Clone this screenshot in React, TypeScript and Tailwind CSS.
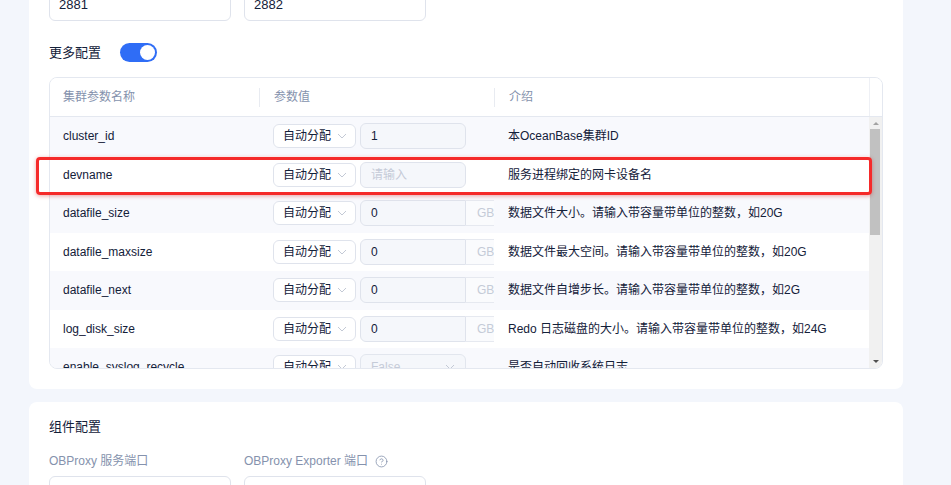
import { CircleHelp } from "lucide-react";

type Row = {
  name: string;
  value?: string;
  placeholder?: string;
  unit?: string;
  select?: string;
  desc: string;
};

const rows: Row[] = [
  { name: "cluster_id", value: "1", desc: "本OceanBase集群ID" },
  { name: "devname", placeholder: "请输入", desc: "服务进程绑定的网卡设备名" },
  { name: "datafile_size", value: "0", unit: "GB", desc: "数据文件大小。请输入带容量带单位的整数，如20G" },
  { name: "datafile_maxsize", value: "0", unit: "GB", desc: "数据文件最大空间。请输入带容量带单位的整数，如20G" },
  { name: "datafile_next", value: "0", unit: "GB", desc: "数据文件自增步长。请输入带容量带单位的整数，如2G" },
  { name: "log_disk_size", value: "0", unit: "GB", desc: "Redo 日志磁盘的大小。请输入带容量带单位的整数，如24G" },
  { name: "enable_syslog_recycle", select: "False", desc: "是否自动回收系统日志" },
];

function Chevron() {
  return (
    <svg width="10" height="6" viewBox="0 0 10 6" fill="none" className="shrink-0">
      <path d="M1 1l4 4 4-4" stroke="#c3c9d5" strokeWidth="1" />
    </svg>
  );
}

function ValueCell({ row }: { row: Row }) {
  return (
    <div className="flex items-center overflow-hidden">
      <div className="flex h-[24px] w-[83px] shrink-0 items-center justify-between rounded-md border border-[#dfe3ec] bg-white pl-[9px] pr-[8px] text-[12px] text-[#132039]">
        <span>自动分配</span>
        <Chevron />
      </div>
      {row.select ? (
        <div className="ml-1 flex h-[26px] w-[106px] shrink-0 items-center justify-between rounded-md border border-[#e2e6ee] bg-[#f5f7fb] pl-[10px] pr-[10px] text-[12px] text-[#c5cbd8]">
          <span>{row.select}</span>
          <Chevron />
        </div>
      ) : row.unit ? (
        <div className="ml-1 flex shrink-0">
          <div className="flex h-[26px] w-[106px] items-center rounded-l-md border border-[#dfe3ec] bg-[#f5f7fb] px-[10px] text-[12px] text-[#132039]">{row.value}</div>
          <div className="flex h-[26px] w-[44px] items-center border-y border-r border-[#e6e9f0] bg-[#fafbfd] pl-[11px] text-[12px] text-[#c5cbd8]">{row.unit}</div>
        </div>
      ) : (
        <div className="ml-1 flex h-[26px] w-[106px] shrink-0 items-center rounded-md border border-[#dfe3ec] bg-[#f5f7fb] px-[10px] text-[12px]">
          {row.value ? <span className="text-[#132039]">{row.value}</span> : <span className="text-[#c5cbd8]">{row.placeholder}</span>}
        </div>
      )}
    </div>
  );
}

export default function App() {
  return (
    <div className="relative min-h-screen overflow-hidden bg-[#f3f6fc] pl-[29px] text-[#132039]" style={{ fontFamily: '"Liberation Sans", "Noto Sans CJK SC", sans-serif' }}>
      <div className="w-[874px]">
        {/* 集群配置 card, top cut off */}
        <section className="-mt-[31px] rounded-lg bg-white px-5 pb-5 pt-5">
          <div className="flex gap-[13px]">
            <div className="flex h-8 w-[182px] items-center rounded-md border border-[#dfe3ec] px-[9px] text-[13px]">2881</div>
            <div className="flex h-8 w-[182px] items-center rounded-md border border-[#dfe3ec] px-[9px] text-[13px]">2882</div>
          </div>

          <div className="mt-[22px] flex h-[19px] items-center gap-[19px]">
            <span className="text-[13px]">更多配置</span>
            <div className="flex h-[19px] w-[37px] items-center justify-end rounded-full bg-[#2f6df6] pr-[2px]">
              <div className="h-[15px] w-[15px] rounded-full bg-white" />
            </div>
          </div>

          <div className="mt-[15px] overflow-hidden rounded-lg border border-[#e4e8f0]">
            <div className="grid h-[39px] grid-cols-[209px_235px_375px_13px] items-center border-b border-[#e4e8f0] bg-white text-[12px] text-[#8592ad]">
              <div className="pl-[13px]">集群参数名称</div>
              <div className="flex h-full items-center">
                <div className="h-[19px] w-px bg-[#e8ebf1]" />
                <span className="pl-[14px]">参数值</span>
              </div>
              <div className="flex h-full items-center">
                <div className="h-[19px] w-px bg-[#e8ebf1]" />
                <span className="pl-[14px]">介绍</span>
              </div>
              <div className="h-full border-l border-[#eef0f5]" />
            </div>

            <div className="flex h-[251px] overflow-hidden">
              <div className="w-[819px]">
                {rows.map((row, i) => (
                  <div key={row.name} className={`grid h-[38.5px] grid-cols-[209px_235px_375px] items-center text-[12px] ${i % 2 === 0 ? "bg-[#f8f9fd]" : "bg-white"}`}>
                    <div className="pl-[13px]">{row.name}</div>
                    <div className="overflow-hidden pl-[14px]">
                      <ValueCell row={row} />
                    </div>
                    <div className="whitespace-nowrap pl-[14px]">{row.desc}</div>
                  </div>
                ))}
              </div>
              {/* scrollbar */}
              <div className="relative w-[13px] bg-[#f1f1f1]">
                <div className="absolute left-1/2 top-[5px] h-0 w-0 -translate-x-1/2 border-x-[3px] border-b-[3px] border-x-transparent border-b-[#a3a3a3]" />
                <div className="absolute left-[1px] top-[12px] h-[106px] w-[10px] bg-[#c1c1c1]" />
                <div className="absolute bottom-[5px] left-1/2 h-0 w-0 -translate-x-1/2 border-x-[3px] border-t-[3px] border-x-transparent border-t-[#505050]" />
              </div>
            </div>
          </div>
        </section>

        {/* 组件配置 card */}
        <section className="mt-[13px] rounded-lg bg-white px-5 pt-[15px]">
          <h3 className="text-[13px] leading-[20px]">组件配置</h3>
          <div className="mt-[14px] flex gap-[13px] text-[12px] leading-[20px] text-[#8592ad]">
            <div className="w-[182px]">OBProxy 服务端口</div>
            <div className="flex w-[182px] items-center gap-[7px]">
              <span>OBProxy Exporter 端口</span>
              <CircleHelp size={13} strokeWidth={1.5} />
            </div>
          </div>
          <div className="mt-[5px] flex gap-[13px]">
            <div className="h-8 w-[182px] rounded-md border border-[#dfe3ec]" />
            <div className="h-8 w-[182px] rounded-md border border-[#dfe3ec]" />
          </div>
        </section>
      </div>

      {/* annotation highlight */}
      <div className="absolute left-[36px] top-[157px] h-[38px] w-[836px] rounded-[4px] border-[3px] border-[#f52a2a] shadow-[0_1px_4px_rgba(200,0,0,0.35)]" />
    </div>
  );
}
